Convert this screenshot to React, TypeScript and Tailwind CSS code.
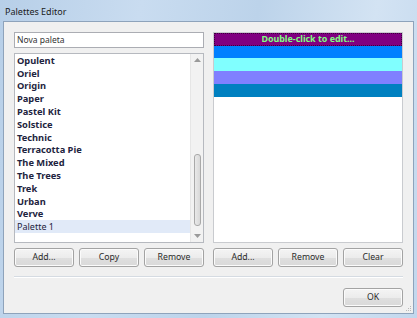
import React from "react";

const items = [
  "Opulent",
  "Oriel",
  "Origin",
  "Paper",
  "Pastel Kit",
  "Solstice",
  "Technic",
  "Terracotta Pie",
  "The Mixed",
  "The Trees",
  "Trek",
  "Urban",
  "Verve",
];

const colors = ["#0080ff", "#80ffff", "#8080ff", "#0080c0"];

function Btn({ label }: { label: string }) {
  return (
    <div className="w-[60px] h-[19px] rounded-[3px] border border-[#a3a3a3] bg-[linear-gradient(to_bottom,#f4f4f4_0%,#ececec_50%,#dfdfdf_51%,#d9d9d9_100%)] shadow-[inset_0_0_0_1px_#fbfbfb] flex items-center justify-center text-[8.7px] text-[#2a2a2a] leading-none">
      {label}
    </div>
  );
}

export default function App() {
  return (
    <div
      className="w-[417px] h-[318px] flex flex-col bg-[linear-gradient(100deg,#b7cfe8_0%,#c9dcf0_30%,#bcd3ea_55%,#d3e3f3_80%,#c2d7ed_100%)] overflow-hidden"
      style={{ fontFamily: '"Noto Sans", "Open Sans", Arial, sans-serif' }}
    >
      <div className="h-[21px] flex items-center pl-[5px] pt-[1px] text-[9px] text-[#1a1a1a] shrink-0 leading-none">
        Palettes Editor
      </div>
      <div className="mx-[3px] mb-[4px] flex-1 border border-[#8ea3bb] bg-[#f0f0f0] flex flex-col relative">
        <div className="flex gap-[9px] pl-[10px] pt-[10px]">
          {/* left column */}
          <div className="w-[190px] flex flex-col gap-[5px]">
            <div className="h-[16px] border border-[#abadb3] bg-white flex items-center pl-[2px] text-[8.5px] text-[#333] leading-none">
              Nova paleta
            </div>
            <div className="h-[190px] border border-[#b6b9bf] bg-white flex">
              <div className="flex-1 flex flex-col">
                {items.map((t) => (
                  <div
                    key={t}
                    className="h-[12.8px] flex items-center pl-[2px] text-[9.3px] font-bold text-[#1e2440] leading-none"
                  >
                    {t}
                  </div>
                ))}
                <div className="h-[12.8px] flex items-center pl-[2px] text-[9px] text-[#1e2440] bg-[#e1eaf8] leading-none">
                  Palette 1
                </div>
              </div>
              <div className="w-[13px] bg-[#f2f2f2] border-l border-[#e6e6e6] flex flex-col items-center pt-[4px] pb-[4px]">
                <svg width="7" height="4" viewBox="0 0 7 4">
                  <path d="M3.5 0 L7 4 L0 4 Z" fill="#9a9a9a" />
                </svg>
                <div className="flex-1 w-full flex flex-col items-center justify-end pb-[8px]">
                  <div className="w-[7px] h-[72px] rounded-[3px] border border-[#a9a9a9] bg-[linear-gradient(to_right,#e9e9e9,#d8d8d8)]" />
                </div>
                <svg width="7" height="4" viewBox="0 0 7 4">
                  <path d="M0 0 L7 0 L3.5 4 Z" fill="#9a9a9a" />
                </svg>
              </div>
            </div>
            <div className="flex gap-[5px]">
              <Btn label="Add..." />
              <Btn label="Copy" />
              <Btn label="Remove" />
            </div>
          </div>
          {/* right column */}
          <div className="w-[190px] flex flex-col gap-[5px]">
            <div className="h-[211px] border border-[#c9cbcf] bg-white flex flex-col">
              <div className="h-[12.7px] bg-[#800080] border border-dotted border-[#3c003c] flex items-center justify-center text-[8.9px] font-bold text-[#80ff80] leading-none">
                Double-click to edit...
              </div>
              {colors.map((c) => (
                <div key={c} className="h-[12.8px]" style={{ backgroundColor: c }} />
              ))}
            </div>
            <div className="flex gap-[5px]">
              <Btn label="Add..." />
              <Btn label="Remove" />
              <Btn label="Clear" />
            </div>
          </div>
        </div>
        <div className="mx-[10px] mt-[9px] border-t border-[#d5dbe2] border-b border-b-white" />
        <div className="flex justify-end pr-[10px] pt-[10px]">
          <Btn label="OK" />
        </div>
        <svg className="absolute right-[1px] bottom-[1px]" width="7" height="7" viewBox="0 0 7 7">
          <rect x="5" y="1" width="1" height="1" fill="#b8b8b8" />
          <rect x="3" y="3" width="1" height="1" fill="#b8b8b8" />
          <rect x="5" y="3" width="1" height="1" fill="#b8b8b8" />
          <rect x="1" y="5" width="1" height="1" fill="#b8b8b8" />
          <rect x="3" y="5" width="1" height="1" fill="#b8b8b8" />
          <rect x="5" y="5" width="1" height="1" fill="#b8b8b8" />
        </svg>
      </div>
    </div>
  );
}
